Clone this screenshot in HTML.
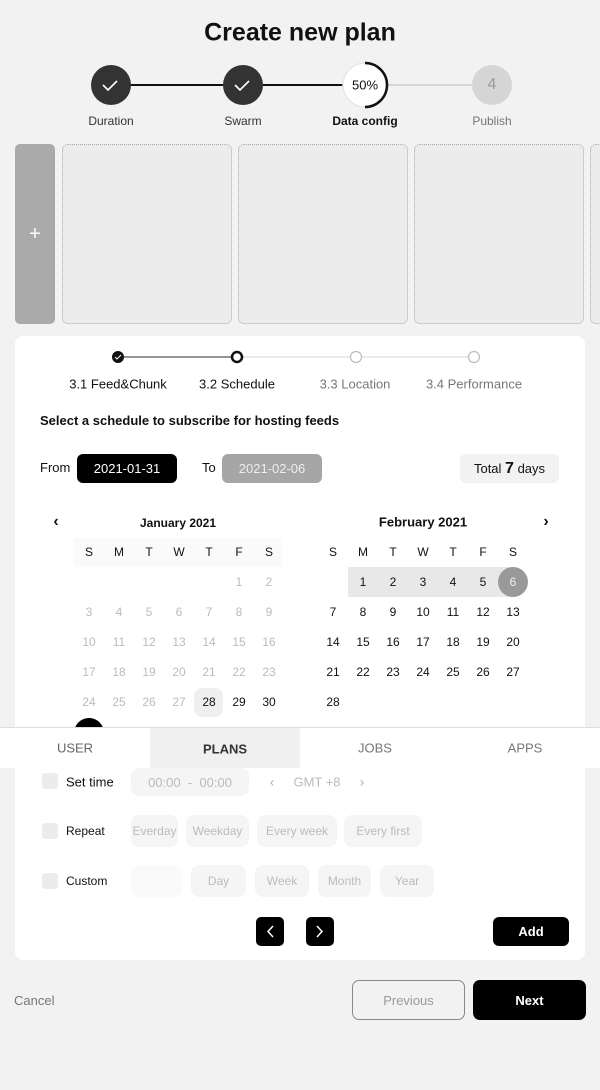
<!DOCTYPE html><html><head><meta charset="utf-8"><style>
*{margin:0;padding:0;box-sizing:border-box}
body{width:600px;height:1090px;background:#f2f2f2;font-family:"Liberation Sans",sans-serif;position:relative;overflow:hidden;color:#111}
.a{position:absolute}
.c{position:absolute;transform:translate(-50%,-50%);white-space:nowrap}
.chip{position:absolute;background:#f5f5f5;border-radius:8px;color:#bbb;font-size:12px;display:flex;align-items:center;justify-content:center}
.cb{position:absolute;width:16px;height:16px;background:#ececec;border-radius:3px;left:42px}
.lbl{position:absolute;left:66px;font-size:12px;transform:translateY(-50%)}
.card{position:absolute;top:144px;height:180px;width:170px;background:#ececec;border:1px dotted #aaa;border-radius:6px}
</style></head><body>
<div class="c" style="left:300px;top:33px;font-size:25px;font-weight:bold">Create new plan</div>
<div class="a" style="left:111px;top:84px;width:254px;height:2px;background:#111"></div>
<div class="a" style="left:365px;top:84px;width:127px;height:2px;background:#d5d5d5"></div>
<svg class="a" style="left:0;top:0" width="600" height="140">
<circle cx="111" cy="85" r="20" fill="#333"/><path d="M103 85l5 5 9-9" stroke="#fff" stroke-width="1.6" fill="none"/>
<circle cx="243" cy="85" r="20" fill="#333"/><path d="M235 85l5 5 9-9" stroke="#fff" stroke-width="1.6" fill="none"/>
<circle cx="365" cy="85" r="22" fill="#fff" stroke="#e8e8e8" stroke-width="1.5"/>
<path d="M365 63 A22 22 0 0 1 365 107" stroke="#111" stroke-width="2.5" fill="none"/>
<circle cx="492" cy="85" r="20" fill="#d5d5d5"/>
</svg>
<div class="c" style="left:365px;top:85px;font-size:13px">50%</div>
<div class="c" style="left:492px;top:85px;font-size:16px;color:#999">4</div>
<div class="c" style="left:111px;top:121px;font-size:12px;color:#333">Duration</div>
<div class="c" style="left:243px;top:121px;font-size:12px;color:#333">Swarm</div>
<div class="c" style="left:365px;top:121px;font-size:12px;font-weight:bold">Data config</div>
<div class="c" style="left:492px;top:121px;font-size:12px;color:#777">Publish</div>

<div class="a" style="left:15px;top:144px;width:40px;height:180px;background:#aaa;border-radius:5px;color:#fff;font-size:20px;display:flex;align-items:center;justify-content:center">+</div>
<div class="card" style="left:62px"></div><div class="card" style="left:238px"></div><div class="card" style="left:414px"></div><div class="card" style="left:590px"></div>

<div class="a" style="left:15px;top:336px;width:570px;height:624px;background:#fff;border-radius:8px"></div>
<svg class="a" style="left:0;top:340px" width="600" height="30">
<line x1="124" y1="17" x2="231" y2="17" stroke="#555" stroke-width="1.2"/>
<line x1="243" y1="17" x2="350" y2="17" stroke="#ddd" stroke-width="1.2"/>
<line x1="362" y1="17" x2="468" y2="17" stroke="#ddd" stroke-width="1.2"/>
<circle cx="118" cy="17" r="6" fill="#111"/><path d="M115 17l2 2 4-4" stroke="#fff" stroke-width="1" fill="none"/>
<circle cx="237" cy="17" r="5" fill="#fff" stroke="#111" stroke-width="2.5"/>
<circle cx="356" cy="17" r="5.5" fill="#fff" stroke="#bbb" stroke-width="1.2"/>
<circle cx="474" cy="17" r="5.5" fill="#fff" stroke="#bbb" stroke-width="1.2"/>
</svg>
<div class="c" style="left:118px;top:384px;font-size:13px">3.1 Feed&amp;Chunk</div>
<div class="c" style="left:237px;top:384px;font-size:13px">3.2 Schedule</div>
<div class="c" style="left:355px;top:384px;font-size:13px;color:#777">3.3 Location</div>
<div class="c" style="left:474px;top:384px;font-size:13px;color:#777">3.4 Performance</div>
<div class="a" style="left:40px;top:413px;font-size:13px;font-weight:bold">Select a schedule to subscribe for hosting feeds</div>
<div class="a" style="left:40px;top:460px;font-size:13px">From</div>
<div class="a" style="left:77px;top:454px;width:100px;height:29px;background:#000;color:#fff;border-radius:6px;font-size:13px;display:flex;align-items:center;justify-content:center">2021-01-31</div>
<div class="a" style="left:202px;top:460px;font-size:13px">To</div>
<div class="a" style="left:222px;top:454px;width:100px;height:29px;background:#a6a6a6;color:#eee;border-radius:6px;font-size:13px;display:flex;align-items:center;justify-content:center">2021-02-06</div>
<div class="a" style="left:460px;top:454px;width:99px;height:29px;background:#f2f2f2;border-radius:6px;font-size:13px;display:flex;align-items:center;justify-content:center">Total&nbsp;<b style="font-size:16px">7</b>&nbsp;days</div>

<div class="c" style="left:56px;top:522px;font-size:16px;font-weight:bold">‹</div>
<div class="c" style="left:546px;top:522px;font-size:16px;font-weight:bold">›</div>
<div class="c" style="left:178px;top:523px;font-size:12px;font-weight:bold">January 2021</div>
<div class="c" style="left:423px;top:522px;font-size:13px;font-weight:bold">February 2021</div>
<div class="a" style="left:74px;top:538px;width:208px;height:29px;background:#fafafa"></div>
<div class="a" style="left:348px;top:567px;width:165px;height:30px;background:#e8e8e8"></div>
<div class="a" style="left:498px;top:567px;width:30px;height:30px;background:#999;border-radius:50%"></div>
<div class="a" style="left:194px;top:688px;width:29px;height:29px;background:#efefef;border-radius:8px"></div>
<div id="cal"></div>
<div class="a" style="left:74px;top:718px;width:30px;height:30px;background:#000;border-radius:50%"></div>

<div class="a" style="left:0;top:727px;width:600px;height:41px;background:#fff;border-top:1px solid #ddd"></div>
<div class="a" style="left:150px;top:728px;width:150px;height:40px;background:#f0f0f0"></div>
<div class="c" style="left:75px;top:748px;font-size:13px;color:#666">USER</div>
<div class="c" style="left:225px;top:749px;font-size:13px;font-weight:bold;color:#333">PLANS</div>
<div class="c" style="left:375px;top:748px;font-size:13px;color:#777">JOBS</div>
<div class="c" style="left:525px;top:748px;font-size:13px;color:#777">APPS</div>

<div class="cb" style="top:773px"></div><div class="lbl" style="top:782px;font-size:13px">Set time</div>
<div class="chip" style="left:131px;top:768px;width:118px;height:28px;font-size:13px">00:00&nbsp;&nbsp;-&nbsp;&nbsp;00:00</div>
<div class="c" style="left:272px;top:782px;font-size:13px;color:#aaa">‹</div>
<div class="c" style="left:317px;top:782px;font-size:13px;color:#bbb">GMT +8</div>
<div class="c" style="left:362px;top:782px;font-size:13px;color:#aaa">›</div>
<div class="cb" style="top:823px"></div><div class="lbl" style="top:831px">Repeat</div>
<div class="chip" style="left:131px;top:815px;width:47px;height:32px">Everday</div>
<div class="chip" style="left:186px;top:815px;width:63px;height:32px">Weekday</div>
<div class="chip" style="left:257px;top:815px;width:80px;height:32px">Every week</div>
<div class="chip" style="left:344px;top:815px;width:78px;height:32px">Every first</div>
<div class="cb" style="top:873px"></div><div class="lbl" style="top:881px">Custom</div>
<div class="chip" style="left:131px;top:865px;width:51px;height:32px;background:#fafafa"></div>
<div class="chip" style="left:191px;top:865px;width:55px;height:32px">Day</div>
<div class="chip" style="left:255px;top:865px;width:54px;height:32px">Week</div>
<div class="chip" style="left:318px;top:865px;width:53px;height:32px">Month</div>
<div class="chip" style="left:380px;top:865px;width:54px;height:32px">Year</div>
<svg class="a" style="left:256px;top:917px" width="80" height="30">
<rect x="0" y="0" width="28" height="29" rx="5" fill="#000"/><path d="M17 9l-5 5.5 5 5.5" stroke="#fff" stroke-width="1.5" fill="none"/>
<rect x="50" y="0" width="28" height="29" rx="5" fill="#000"/><path d="M61 9l5 5.5-5 5.5" stroke="#fff" stroke-width="1.5" fill="none"/>
</svg>
<div class="a" style="left:493px;top:917px;width:76px;height:29px;background:#000;color:#fff;border-radius:6px;font-size:13px;font-weight:bold;display:flex;align-items:center;justify-content:center">Add</div>

<div class="a" style="left:14px;top:993px;font-size:13px;color:#777">Cancel</div>
<div class="a" style="left:352px;top:980px;width:113px;height:40px;border:1px solid #888;border-radius:7px;font-size:13px;color:#999;display:flex;align-items:center;justify-content:center">Previous</div>
<div class="a" style="left:473px;top:980px;width:113px;height:40px;background:#000;border-radius:7px;font-size:13px;font-weight:bold;color:#fff;display:flex;align-items:center;justify-content:center">Next</div>
<script>
var h='',W=['S','M','T','W','T','F','S'];
function t(x,y,s,st){h+='<div class="c" style="left:'+x+'px;top:'+y+'px;font-size:12px;'+st+'">'+s+'</div>';}
for(var i=0;i<7;i++){t(89+30*i,552,W[i],'');t(333+30*i,552,W[i],'');}
var d=1;for(var p=5;d<=30;p++){var r=Math.floor(p/7),c=p%7;t(89+30*c,582+30*r,d,d>=28?'color:#111':'color:#bbb');d++;}
for(d=1;d<=28;d++){var p=d,r=Math.floor(p/7),c=p%7;t(333+30*c,582+30*r,d,d==6?'color:#eee':'');}
document.getElementById('cal').innerHTML=h;
</script>
</body></html>
